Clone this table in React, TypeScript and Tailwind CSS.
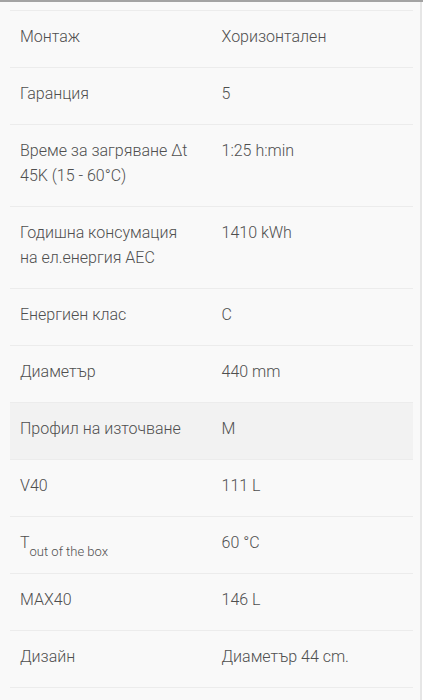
import { ReactNode } from "react";

type Spec = { label: ReactNode; value: string; shaded?: boolean };

const specs: Spec[] = [
  { label: "Монтаж", value: "Хоризонтален" },
  { label: "Гаранция", value: "5" },
  { label: "Време за загряване Δt 45K (15 - 60°C)", value: "1:25 h:min" },
  {
    label: (
      <>
        Годишна консумация
        <br />
        на ел.енергия AEC
      </>
    ),
    value: "1410 kWh",
  },
  { label: "Енергиен клас", value: "C" },
  { label: "Диаметър", value: "440 mm" },
  { label: "Профил на източване", value: "M", shaded: true },
  { label: "V40", value: "111 L" },
  {
    label: (
      <>
        T<sub className="text-[13px] align-[-5px] leading-none">out of the box</sub>
      </>
    ),
    value: "60 °C",
  },
  { label: "MAX40", value: "146 L" },
  { label: "Дизайн", value: "Диаметър 44 cm." },
];

const App = () => {
  return (
    <div className="h-[700px] w-[423px] overflow-hidden bg-[#f9f9f9] border-t-2 border-[#a3a3a3] font-['Roboto',sans-serif]">
      <div className="flex h-full">
        <div className="flex-1 pl-[10px] pr-[7px] pt-[8px]">
          <div className="border-t border-[#ececec]">
            {specs.map((spec, i) => (
              <div
                key={i}
                className={`flex border-b border-[#ececec] pt-[13px] pb-[18px] text-[16px] font-light leading-[25px] text-[#4f4f4f] ${
                  spec.shaded ? "bg-[#f2f2f2]" : ""
                }`}
              >
                <div className="w-1/2 px-[10px]">{spec.label}</div>
                <div className="w-1/2 px-[10px]">{spec.value}</div>
              </div>
            ))}
          </div>
        </div>
        <div className="w-[3px] border-l-2 border-[#e6e6e6] bg-white" />
      </div>
    </div>
  );
};

export default App;
